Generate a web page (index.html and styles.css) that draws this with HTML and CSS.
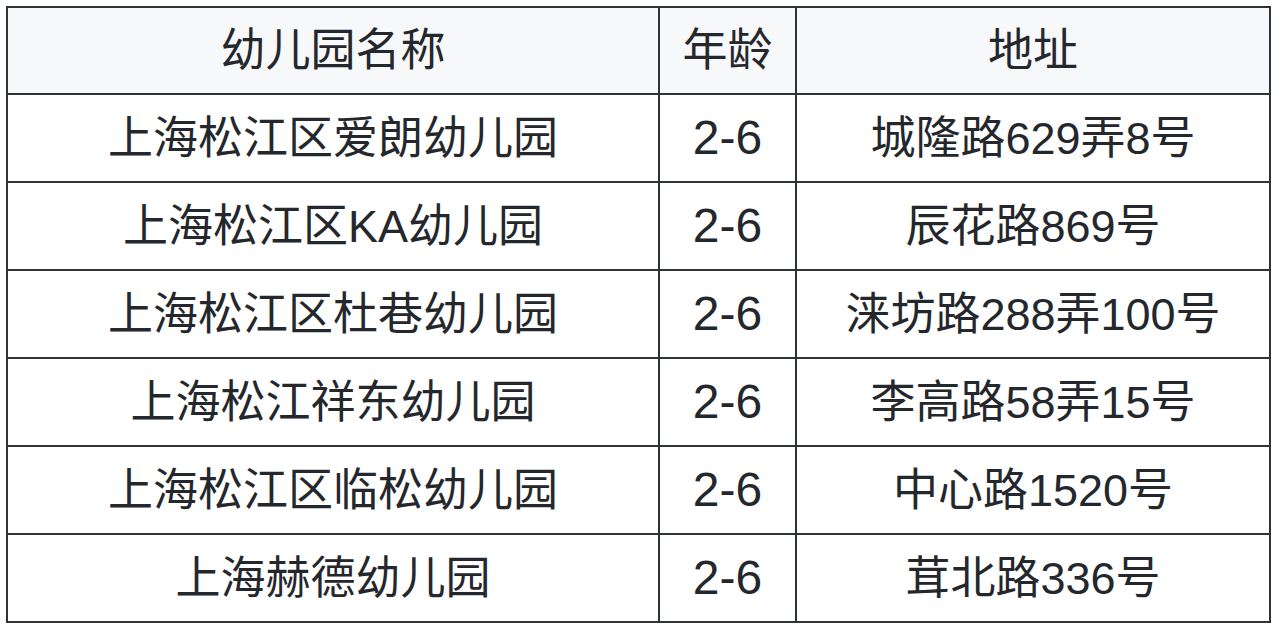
FILE: index.html
```html
<!DOCTYPE html>
<html lang="zh-CN">
<head>
<meta charset="utf-8">
<title>幼儿园</title>
<link rel="stylesheet" href="styles.css">
</head>
<body>
<div class="wrap">
<table class="kg">
  <colgroup>
    <col class="c-name">
    <col class="c-age">
    <col class="c-addr">
  </colgroup>
  <thead>
    <tr><th>幼儿园名称</th><th>年龄</th><th>地址</th></tr>
  </thead>
  <tbody>
    <tr><td>上海松江区爱朗幼儿园</td><td>2-6</td><td>城隆路629弄8号</td></tr>
    <tr><td>上海松江区KA幼儿园</td><td>2-6</td><td>辰花路869号</td></tr>
    <tr><td>上海松江区杜巷幼儿园</td><td>2-6</td><td>涞坊路288弄100号</td></tr>
    <tr><td>上海松江祥东幼儿园</td><td>2-6</td><td>李高路58弄15号</td></tr>
    <tr><td>上海松江区临松幼儿园</td><td>2-6</td><td>中心路1520号</td></tr>
    <tr><td>上海赫德幼儿园</td><td>2-6</td><td>茸北路336号</td></tr>
  </tbody>
</table>
</div>
</body>
</html>
```

FILE: styles.css
```css
html, body {
  margin: 0;
  padding: 0;
  background: #ffffff;
}
.wrap {
  padding: 6px 0 0 6px;
}
.kg {
  border-collapse: collapse;
  width: 1263px;
  table-layout: fixed;
  font-family: "Liberation Sans", "Noto Sans CJK SC", sans-serif;
  font-size: 45px;
  color: #24272c;
}
.c-name { width: 652px; }
.c-age { width: 137px; }
.c-addr { width: 474px; }
.kg th, .kg td {
  border: 2px solid #2f3338;
  height: 88px;
  padding: 0;
  text-align: center;
  vertical-align: middle;
  font-weight: 400;
  line-height: 1;
  box-sizing: border-box;
}
.kg thead th {
  height: 87px;
  background: #f7f8fa;
}
.kg td:nth-child(2) {
  font-size: 48px;
}
```
